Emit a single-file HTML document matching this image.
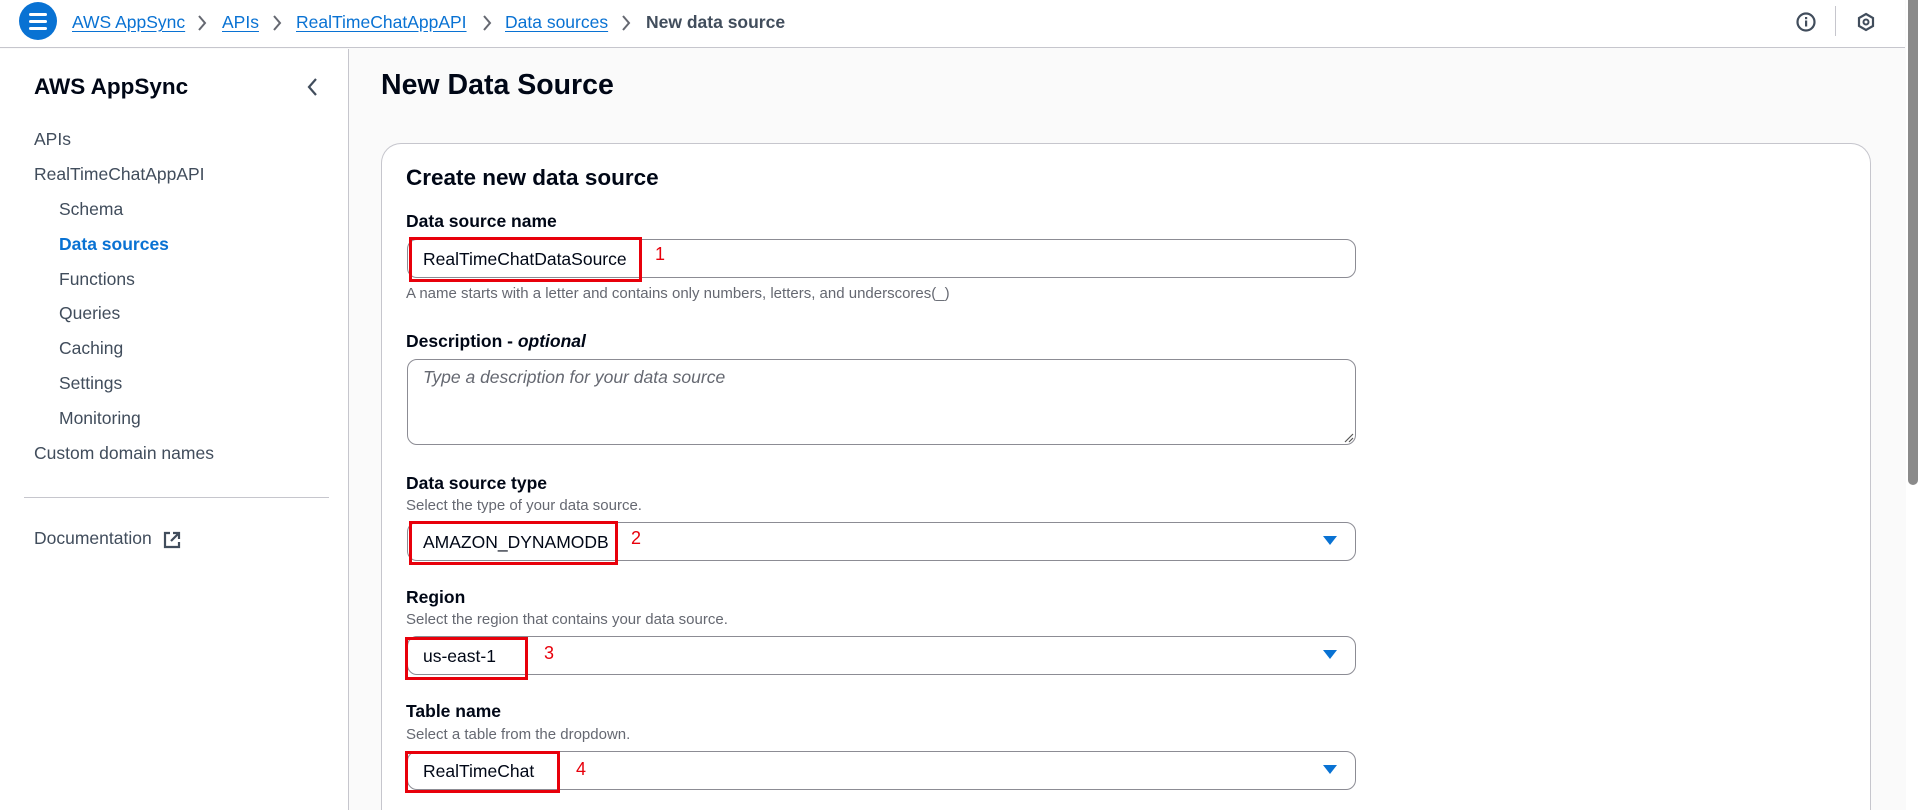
<!DOCTYPE html>
<html style="overflow:hidden;height:810px"><head><meta charset="utf-8"><style>
*{box-sizing:border-box;margin:0;padding:0}
body{width:1918px;height:810px;overflow:hidden;background:#fafafa;font-family:"Liberation Sans",sans-serif;color:#000716;position:relative}
.a{position:absolute;white-space:nowrap}
.hdr{position:absolute;left:0;top:0;width:1905px;height:48px;background:#fff;border-bottom:1px solid #c6c6cd}
.bc{font-size:17.5px;top:12px;color:#0972d3;text-decoration:underline;text-underline-offset:3px}
.sep{position:absolute;top:15px}
.side{position:absolute;left:0;top:49px;width:349px;height:761px;background:#fff;border-right:1px solid #c6c6cd}
.nav{font-size:17.5px;color:#414d5c;line-height:22px}
.card{position:absolute;left:381px;top:143px;width:1490px;height:667px;background:#fff;border:1px solid #c6c6cd;border-bottom:none;border-radius:20px 20px 0 0}
.lbl{font-size:17.5px;font-weight:bold;left:406px;line-height:22px}
.sub{font-size:15px;color:#656871;left:406px;line-height:18px}
.inp{position:absolute;left:407px;width:949px;height:39px;border:1px solid #8c8c94;border-radius:10px;background:#fff}
.val{font-size:17.5px;left:423px;line-height:22px}
.red{position:absolute;border:3.5px solid #e8000b}
.num{color:#e8000b;font-size:18px;line-height:22px}
.arr{position:absolute;left:1323px;width:0;height:0;border-left:7px solid transparent;border-right:7px solid transparent;border-top:9px solid #0972d3}
</style></head><body>
<div class="hdr"></div>
<div class="a" style="left:19px;top:2px;width:38px;height:38px;border-radius:50%;background:#0972d3"></div>
<div class="a" style="left:29px;top:13px;width:18px;height:3px;background:#fff;border-radius:2px"></div>
<div class="a" style="left:29px;top:20px;width:18px;height:3px;background:#fff;border-radius:2px"></div>
<div class="a" style="left:29px;top:27px;width:18px;height:3px;background:#fff;border-radius:2px"></div>
<div class="a bc" style="left:72px">AWS AppSync</div>
<svg class="sep" style="left:197px" width="10" height="16" viewBox="0 0 10 16"><path d="M2 1L8 8L2 15" fill="none" stroke="#656871" stroke-width="2"/></svg>
<div class="a bc" style="left:222px">APIs</div>
<svg class="sep" style="left:272px" width="10" height="16" viewBox="0 0 10 16"><path d="M2 1L8 8L2 15" fill="none" stroke="#656871" stroke-width="2"/></svg>
<div class="a bc" style="left:296px">RealTimeChatAppAPI</div>
<svg class="sep" style="left:482px" width="10" height="16" viewBox="0 0 10 16"><path d="M2 1L8 8L2 15" fill="none" stroke="#656871" stroke-width="2"/></svg>
<div class="a bc" style="left:505px">Data sources</div>
<svg class="sep" style="left:621px" width="10" height="16" viewBox="0 0 10 16"><path d="M2 1L8 8L2 15" fill="none" stroke="#656871" stroke-width="2"/></svg>
<div class="a" style="left:646px;top:12px;font-size:17.5px;font-weight:bold;color:#414d5c">New data source</div>
<svg class="a" style="left:1795px;top:11px" width="22" height="22" viewBox="0 0 22 22"><circle cx="11" cy="11" r="8.5" fill="none" stroke="#414d5c" stroke-width="2.2"/><rect x="10" y="9.5" width="2.2" height="6" fill="#414d5c"/><rect x="10" y="6" width="2.2" height="2.2" fill="#414d5c"/></svg>
<div class="a" style="left:1835px;top:6px;width:1px;height:30px;background:#c6c6cd"></div>
<svg class="a" style="left:1856px;top:12px" width="20" height="20" viewBox="0 0 20 20"><path d="M10 2 L17 6 V14 L10 18 L3 14 V6 Z" fill="none" stroke="#414d5c" stroke-width="2.2"/><circle cx="10" cy="10" r="2.5" fill="none" stroke="#414d5c" stroke-width="2"/></svg>
<div class="a" style="left:1906px;top:0;width:12px;height:810px;background:#fff"></div>
<div class="a" style="left:1908px;top:0;width:10px;height:485px;background:#8a8a8a;border-radius:0 0 5px 5px"></div>

<div class="side"></div>
<div class="a" style="left:34px;top:74px;font-size:22.5px;font-weight:bold">AWS AppSync</div>
<svg class="a" style="left:306px;top:77px" width="12" height="20" viewBox="0 0 12 20"><path d="M10 2L3 10L10 18" fill="none" stroke="#414d5c" stroke-width="2.2"/></svg>
<div class="a nav" style="left:34px;top:128px">APIs</div>
<div class="a nav" style="left:34px;top:163px">RealTimeChatAppAPI</div>
<div class="a nav" style="left:59px;top:198px">Schema</div>
<div class="a nav" style="left:59px;top:233px;color:#0972d3;font-weight:bold">Data sources</div>
<div class="a nav" style="left:59px;top:268px">Functions</div>
<div class="a nav" style="left:59px;top:302px">Queries</div>
<div class="a nav" style="left:59px;top:337px">Caching</div>
<div class="a nav" style="left:59px;top:372px">Settings</div>
<div class="a nav" style="left:59px;top:407px">Monitoring</div>
<div class="a nav" style="left:34px;top:442px">Custom domain names</div>
<div class="a" style="left:24px;top:497px;width:305px;height:1px;background:#c6c6cd"></div>
<div class="a nav" style="left:34px;top:527px">Documentation</div>
<svg class="a" style="left:163px;top:531px" width="18" height="18" viewBox="0 0 18 18"><path d="M7 2H2V16H16V11" fill="none" stroke="#414d5c" stroke-width="2.2"/><path d="M10 2H16V8M16 2L8 10" fill="none" stroke="#414d5c" stroke-width="2.2"/></svg>

<div class="a" style="left:381px;top:67px;font-size:28.5px;font-weight:bold;line-height:36px">New Data Source</div>
<div class="card"></div>
<div class="a" style="left:406px;top:164px;font-size:22.5px;font-weight:bold;line-height:28px">Create new data source</div>

<div class="a lbl" style="top:210px">Data source name</div>
<div class="inp" style="top:239px"></div>
<div class="a val" style="top:248px">RealTimeChatDataSource</div>
<div class="red" style="left:409px;top:237px;width:233px;height:45px"></div>
<div class="a num" style="left:655px;top:243px">1</div>
<div class="a sub" style="top:285px">A name starts with a letter and contains only numbers, letters, and underscores(_)</div>

<div class="a lbl" style="top:330px">Description - <i>optional</i></div>
<div class="inp" style="top:359px;height:86px"></div>
<div class="a val" style="top:366px;color:#656871;font-style:italic">Type a description for your data source</div>
<svg class="a" style="left:1344px;top:433px" width="10" height="10"><path d="M9 1L1 9M9 5L5 9" stroke="#555" stroke-width="1.2"/></svg>

<div class="a lbl" style="top:472px">Data source type</div>
<div class="a sub" style="top:497px">Select the type of your data source.</div>
<div class="inp" style="top:522px"></div>
<div class="a val" style="top:531px">AMAZON_DYNAMODB</div>
<div class="arr" style="top:536px"></div>
<div class="red" style="left:409px;top:521px;width:209px;height:44px"></div>
<div class="a num" style="left:631px;top:527px">2</div>

<div class="a lbl" style="top:586px">Region</div>
<div class="a sub" style="top:611px">Select the region that contains your data source.</div>
<div class="inp" style="top:636px"></div>
<div class="a val" style="top:645px">us-east-1</div>
<div class="arr" style="top:650px"></div>
<div class="red" style="left:405px;top:637px;width:123px;height:43px"></div>
<div class="a num" style="left:544px;top:642px">3</div>

<div class="a lbl" style="top:700px">Table name</div>
<div class="a sub" style="top:726px">Select a table from the dropdown.</div>
<div class="inp" style="top:751px"></div>
<div class="a val" style="top:760px">RealTimeChat</div>
<div class="arr" style="top:765px"></div>
<div class="red" style="left:405px;top:751px;width:155px;height:42px"></div>
<div class="a num" style="left:576px;top:758px">4</div>
</body></html>
